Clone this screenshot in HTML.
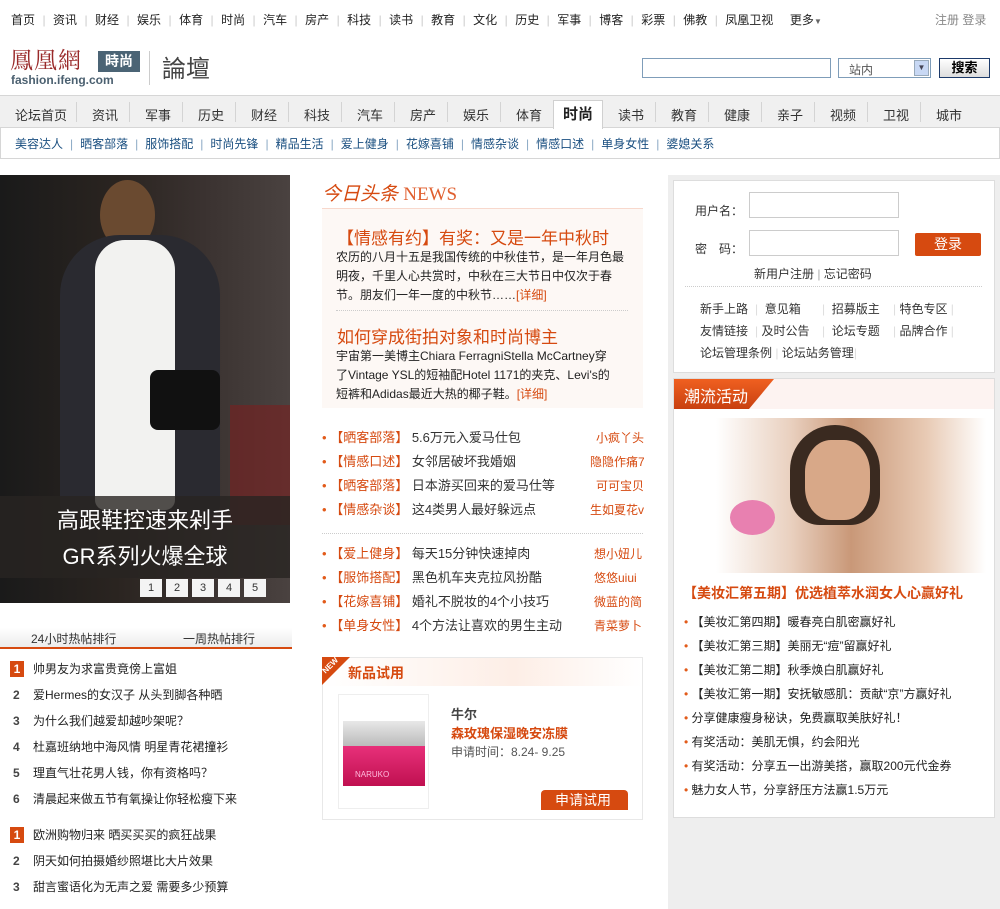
<!DOCTYPE html>
<html><head><meta charset="utf-8"><style>
*{margin:0;padding:0;box-sizing:border-box}
body{width:1000px;height:909px;overflow:hidden;background:#fff;font-family:"Liberation Sans","Noto Sans CJK SC",sans-serif;font-size:12px;color:#333;position:relative}
.a{position:absolute;white-space:nowrap}
.sep{color:#ccc;display:inline-block;width:18px;text-align:center}
.nav{position:absolute;left:0;top:95px;width:1000px;height:33px;background:#f0f0f0;border-top:1px solid #d6d6d6;border-bottom:1px solid #d6d6d6}
.nav span{position:absolute;top:9px;font-size:13px;color:#333}
.nav i{position:absolute;top:6px;width:1px;height:20px;background:#d4d4d4}
.sub{position:absolute;left:0;top:128px;width:1000px;height:31px;border:1px solid #d6d6d6;border-top:none}
.sub span{color:#1a4f80;font-size:12px}
.sub b{color:#8aa8c4;font-weight:normal;margin:0 7px}
.o{color:#d64a10}
.dot{color:#e25b1a}
.l div{height:24px;line-height:24px;overflow:hidden}
.r div{height:24px;line-height:24px}
</style></head><body>
<div class="a" style="left:11px;top:11px;font-size:12px;color:#222">首页<span class="sep">|</span>资讯<span class="sep">|</span>财经<span class="sep">|</span>娱乐<span class="sep">|</span>体育<span class="sep">|</span>时尚<span class="sep">|</span>汽车<span class="sep">|</span>房产<span class="sep">|</span>科技<span class="sep">|</span>读书<span class="sep">|</span>教育<span class="sep">|</span>文化<span class="sep">|</span>历史<span class="sep">|</span>军事<span class="sep">|</span>博客<span class="sep">|</span>彩票<span class="sep">|</span>佛教<span class="sep">|</span>凤凰卫视 &nbsp; &nbsp; 更多<span style="font-size:8px;color:#666">▼</span></div>
<div class="a" style="left:935px;top:11px;color:#888">注册 登录</div>
<div class="a" style="left:10px;top:46px;font-family:'Noto Serif CJK SC',serif;font-size:23px;color:#9a2a2a;letter-spacing:1px;line-height:26px">鳳凰網</div>
<div class="a" style="left:98px;top:51px;width:42px;height:21px;background:#4b6475;color:#fff;font-weight:bold;font-size:14px;text-align:center;line-height:21px">時尚</div>
<div class="a" style="left:11px;top:73px;font-size:12px;font-weight:bold;color:#4b6070">fashion.ifeng.com</div>
<div class="a" style="left:149px;top:51px;width:1px;height:34px;background:#ccc"></div>
<div class="a" style="left:162px;top:52px;font-size:24px;color:#444;font-family:'Noto Sans CJK TC',sans-serif;line-height:30px">論壇</div>
<div class="a" style="left:642px;top:58px;width:189px;height:20px;border:1px solid #7f9db9"></div>
<div class="a" style="left:838px;top:58px;width:93px;height:20px;border:1px solid #7f9db9;color:#555;padding:2px 10px">站内<span style="position:absolute;right:1px;top:1px;width:15px;height:16px;background:#c8d8f4;border:1px solid #9ab;font-size:8px;text-align:center;line-height:14px;color:#445">▼</span></div>
<div class="a" style="left:939px;top:58px;width:51px;height:20px;border:1px solid #1c3a6a;background:linear-gradient(#fff,#ddd);font-weight:bold;font-size:13px;text-align:center;line-height:18px;color:#000">搜索</div>
<div class="nav">
<span style="left:15px">论坛首页</span><i style="left:76px"></i>
<span style="left:92px">资讯</span><i style="left:129px"></i>
<span style="left:145px">军事</span><i style="left:182px"></i>
<span style="left:198px">历史</span><i style="left:235px"></i>
<span style="left:251px">财经</span><i style="left:288px"></i>
<span style="left:304px">科技</span><i style="left:341px"></i>
<span style="left:357px">汽车</span><i style="left:394px"></i>
<span style="left:410px">房产</span><i style="left:447px"></i>
<span style="left:463px">娱乐</span><i style="left:500px"></i>
<span style="left:516px">体育</span>
<div style="position:absolute;left:553px;top:4px;width:50px;height:29px;background:#fff;border:1px solid #d0d0d0;border-bottom:none;font-weight:bold;font-size:15px;text-align:center;line-height:28px;color:#222">时尚</div>
<span style="left:618px">读书</span><i style="left:655px"></i>
<span style="left:671px">教育</span><i style="left:708px"></i>
<span style="left:724px">健康</span><i style="left:761px"></i>
<span style="left:777px">亲子</span><i style="left:814px"></i>
<span style="left:830px">视频</span><i style="left:867px"></i>
<span style="left:883px">卫视</span><i style="left:920px"></i>
<span style="left:936px">城市</span>
</div>
<div class="sub"><div class="a" style="left:14px;top:7px"><span>美容达人</span><b>|</b><span>晒客部落</span><b>|</b><span>服饰搭配</span><b>|</b><span>时尚先锋</span><b>|</b><span>精品生活</span><b>|</b><span>爱上健身</span><b>|</b><span>花嫁喜铺</span><b>|</b><span>情感杂谈</span><b>|</b><span>情感口述</span><b>|</b><span>单身女性</span><b>|</b><span>婆媳关系</span></div></div>

<div class="a" style="left:0;top:175px;width:290px;height:428px;background:linear-gradient(90deg,#1a1a1a,#2a2420 40%,#3a3230 70%,#4a4240);overflow:hidden">
<div style="position:absolute;left:230px;top:230px;width:60px;height:120px;background:#7a2020;opacity:.6"></div>
<div style="position:absolute;left:100px;top:5px;width:55px;height:70px;border-radius:50%;background:#6a4a30"></div>
<div style="position:absolute;left:60px;top:60px;width:160px;height:280px;background:#2a2a30;border-radius:60px 60px 10px 10px"></div>
<div style="position:absolute;left:95px;top:65px;width:80px;height:270px;background:#f2f2f0;border-radius:30px 30px 10px 10px"></div>
<div style="position:absolute;left:150px;top:195px;width:70px;height:60px;background:#111;border-radius:8px"></div>
<div style="position:absolute;left:0;top:321px;width:290px;height:82px;background:rgba(40,36,34,.8)"></div>
<div style="position:absolute;left:0;top:328px;width:290px;text-align:center;color:#fff;font-size:22px;line-height:36px">高跟鞋控速来剁手<br>GR系列火爆全球</div>
<div style="position:absolute;left:140px;top:404px;font-size:11px;color:#333">
<span style="display:inline-block;width:22px;height:18px;background:#f4f4f4;text-align:center;line-height:18px;margin-right:4px">1</span><span style="display:inline-block;width:22px;height:18px;background:#f4f4f4;text-align:center;line-height:18px;margin-right:4px">2</span><span style="display:inline-block;width:22px;height:18px;background:#f4f4f4;text-align:center;line-height:18px;margin-right:4px">3</span><span style="display:inline-block;width:22px;height:18px;background:#f4f4f4;text-align:center;line-height:18px;margin-right:4px">4</span><span style="display:inline-block;width:22px;height:18px;background:#f4f4f4;text-align:center;line-height:18px">5</span></div>
</div>
<div class="a" style="left:0;top:628px;width:292px;height:21px;background:linear-gradient(#fff,#ececec);border-bottom:2px solid #d64a10"></div>
<div class="a" style="left:31px;top:630px;font-size:12px">24小时热帖排行</div>
<div class="a" style="left:183px;top:630px;font-size:12px">一周热帖排行</div>
<div class="a" style="left:10px;top:661px;width:14px;height:16px;background:#d64a10;color:#fff;font-weight:bold;text-align:center;line-height:16px">1</div>
<div class="a" style="left:10px;top:827px;width:14px;height:16px;background:#d64a10;color:#fff;font-weight:bold;text-align:center;line-height:16px">1</div>
<div class="a" style="left:13px;top:656px;font-size:12px;line-height:26px;color:#444;font-weight:bold"><br>2<br>3<br>4<br>5<br>6</div>
<div class="a" style="left:33px;top:656px;font-size:12px;line-height:26px;color:#222">帅男友为求富贵竟傍上富姐<br>爱Hermes的女汉子 从头到脚各种晒<br>为什么我们越爱却越吵架呢？<br>杜嘉班纳地中海风情 明星青花裙撞衫<br>理直气壮花男人钱，你有资格吗？<br>清晨起来做五节有氧操让你轻松瘦下来</div>
<div class="a" style="left:13px;top:822px;font-size:12px;line-height:26px;color:#444;font-weight:bold"><br>2<br>3</div>
<div class="a" style="left:33px;top:822px;font-size:12px;line-height:26px;color:#222">欧洲购物归来 晒买买买的疯狂战果<br>阴天如何拍摄婚纱照堪比大片效果<br>甜言蜜语化为无声之爱 需要多少预算</div>

<div class="a" style="left:322px;top:183px;font-size:19px;color:#d64a10;font-style:italic;line-height:24px">今日头条 <span style="font-family:'Liberation Serif',serif;font-style:normal;color:#e06030">NEWS</span></div>
<div class="a" style="left:322px;top:208px;width:321px;height:200px;background:#fdf8f5;border-top:1px solid #f8d8cc"></div>
<div class="a o" style="left:337px;top:224px;font-size:17px">【情感有约】有奖：又是一年中秋时</div>
<div class="a" style="left:336px;top:248px;font-size:12px;line-height:19px;color:#222">农历的八月十五是我国传统的中秋佳节，是一年月色最<br>明夜，千里人心共赏时，中秋在三大节日中仅次于春<br>节。朋友们一年一度的中秋节……<span class="o">[详细]</span></div>
<div class="a" style="left:336px;top:310px;width:292px;border-top:1px dotted #ccc"></div>
<div class="a o" style="left:337px;top:323px;font-size:17px">如何穿成街拍对象和时尚博主</div>
<div class="a" style="left:336px;top:347px;font-size:12px;line-height:19px;color:#222">宇宙第一美博主Chiara FerragniStella McCartney穿<br>了Vintage YSL的短袖配Hotel 1171的夹克、Levi's的<br>短裤和Adidas最近大热的椰子鞋。<span class="o">[详细]</span></div>
<div class="a l" style="left:322px;top:426px;font-size:13px"><div><span class="dot">•</span> <span class="o">【晒客部落】</span> 5.6万元入爱马仕包</div><div><span class="dot">•</span> <span class="o">【情感口述】</span> 女邻居破坏我婚姻</div><div><span class="dot">•</span> <span class="o">【晒客部落】</span> 日本游买回来的爱马仕等</div><div><span class="dot">•</span> <span class="o">【情感杂谈】</span> 这4类男人最好躲远点</div></div>
<div class="a o l" style="left:590px;top:426px;font-size:12px;text-align:right;width:54px"><div>小疯丫头</div><div>隐隐作痛7</div><div>可可宝贝</div><div>生如夏花v</div></div>
<div class="a" style="left:322px;top:533px;width:321px;border-top:1px dotted #ccc"></div>
<div class="a l" style="left:322px;top:542px;font-size:13px"><div><span class="dot">•</span> <span class="o">【爱上健身】</span> 每天15分钟快速掉肉</div><div><span class="dot">•</span> <span class="o">【服饰搭配】</span> 黑色机车夹克拉风扮酷</div><div><span class="dot">•</span> <span class="o">【花嫁喜铺】</span> 婚礼不脱妆的4个小技巧</div><div><span class="dot">•</span> <span class="o">【单身女性】</span> 4个方法让喜欢的男生主动</div></div>
<div class="a o l" style="left:594px;top:542px;font-size:12px;width:50px"><div>想小妞儿</div><div>悠悠uiui</div><div>微蓝的简</div><div>青菜萝卜</div></div>
<div class="a" style="left:322px;top:657px;width:321px;height:163px;border:1px solid #e8e8e8"></div>
<div class="a" style="left:323px;top:658px;width:319px;height:28px;background:linear-gradient(90deg,#fff,#fdeee6 60%,#fff)"></div>
<div class="a" style="left:322px;top:657px;width:0;height:0;border-top:28px solid #d64a10;border-right:28px solid transparent"></div>
<div class="a" style="left:321px;top:661px;color:#fff;font-size:8px;font-weight:bold;transform:rotate(-45deg)">NEW</div>
<div class="a o" style="left:348px;top:663px;font-size:14px;font-weight:bold">新品试用</div>
<div class="a" style="left:338px;top:694px;width:91px;height:115px;border:1px solid #eee"></div>
<div class="a" style="left:343px;top:721px;width:82px;height:25px;background:linear-gradient(#e8e8e8,#bbb)"></div>
<div class="a" style="left:343px;top:746px;width:82px;height:40px;background:linear-gradient(#e8307a,#c01050);color:#fbd;font-size:8px;padding-top:24px;padding-left:12px">NARUKO</div>
<div class="a" style="left:451px;top:704px;font-size:13px;font-weight:bold;color:#444">牛尔</div>
<div class="a o" style="left:451px;top:723px;font-size:13px;font-weight:bold">森玫瑰保湿晚安冻膜</div>
<div class="a" style="left:451px;top:743px;font-size:12px;color:#555">申请时间：8.24- 9.25</div>
<div class="a" style="left:541px;top:790px;width:87px;height:20px;background:#d64a10;border-radius:4px 4px 0 0;color:#fff;font-size:14px;line-height:20px;padding-left:14px">申请试用</div>

<div class="a" style="left:668px;top:175px;width:332px;height:734px;background:#eee"></div>
<div class="a" style="left:673px;top:180px;width:322px;height:193px;background:#fff;border:1px solid #ddd"></div>
<div class="a" style="left:695px;top:202px;font-size:12px">用户名：</div>
<div class="a" style="left:749px;top:192px;width:150px;height:26px;border:1px solid #ccc"></div>
<div class="a" style="left:695px;top:240px;font-size:12px">密　码：</div>
<div class="a" style="left:749px;top:230px;width:150px;height:26px;border:1px solid #ccc"></div>
<div class="a" style="left:915px;top:233px;width:66px;height:23px;background:#d64a10;color:#fff;font-size:14px;text-align:center;line-height:23px;border-radius:2px">登录</div>
<div class="a" style="left:754px;top:265px;font-size:12px">新用户注册 <span style="color:#aaa">|</span> 忘记密码</div>
<div class="a" style="left:685px;top:286px;width:297px;border-top:1px dotted #ccc"></div>
<div class="a" style="left:700px;top:298px;font-size:12px;line-height:22px">新手上路<br>友情链接<br>论坛管理条例 <span style="color:#ddd">|</span> 论坛站务管理<span style="color:#ddd">|</span></div>
<div class="a" style="left:755px;top:298px;font-size:12px;line-height:22px"><span style="color:#ddd">|</span> &nbsp;意见箱<br><span style="color:#ddd">|</span> 及时公告</div>
<div class="a" style="left:822px;top:298px;font-size:12px;line-height:22px"><span style="color:#ddd">|</span> &nbsp;招募版主<br><span style="color:#ddd">|</span> &nbsp;论坛专题</div>
<div class="a" style="left:893px;top:298px;font-size:12px;line-height:22px"><span style="color:#ddd">|</span> 特色专区 <span style="color:#ddd">|</span><br><span style="color:#ddd">|</span> 品牌合作 <span style="color:#ddd">|</span></div>
<div class="a" style="left:673px;top:378px;width:322px;height:440px;background:#fff;border:1px solid #ddd"></div>
<div class="a" style="left:674px;top:379px;width:320px;height:30px;background:#fdf3f1"></div>
<div class="a" style="left:674px;top:379px;width:100px;height:30px;background:linear-gradient(#f06020,#c84010);clip-path:polygon(0 0,100% 0,75% 100%,0 100%)"></div>
<div class="a" style="left:684px;top:383px;color:#fff;font-size:16px">潮流活动</div>
<div class="a" style="left:686px;top:418px;width:300px;height:155px;background:linear-gradient(90deg,#fff 10%,#e9d0bf 35%,#c99878 55%,#e8cab4 80%,#fff)"></div>
<div class="a" style="left:790px;top:425px;width:90px;height:100px;border-radius:45px 45px 30px 30px;background:#3a2a20"></div>
<div class="a" style="left:805px;top:440px;width:65px;height:80px;border-radius:40%;background:#d8a888"></div>
<div class="a" style="left:730px;top:500px;width:45px;height:35px;border-radius:50%;background:#e880b0"></div>
<div class="a o" style="left:683px;top:583px;font-size:14px;font-weight:bold">【美妆汇第五期】优选植萃水润女人心赢好礼</div>
<div class="a r" style="left:684px;top:610px;font-size:12px;color:#222"><div><span class="dot">•</span> 【美妆汇第四期】暖春亮白肌密赢好礼</div><div><span class="dot">•</span> 【美妆汇第三期】美丽无“痘”留赢好礼</div><div><span class="dot">•</span> 【美妆汇第二期】秋季焕白肌赢好礼</div><div><span class="dot">•</span> 【美妆汇第一期】安抚敏感肌：贡献“京”方赢好礼</div><div><span class="dot">•</span> 分享健康瘦身秘诀，免费赢取美肤好礼！</div><div><span class="dot">•</span> 有奖活动：美肌无惧，约会阳光</div><div><span class="dot">•</span> 有奖活动：分享五一出游美搭，赢取200元代金券</div><div><span class="dot">•</span> 魅力女人节，分享舒压方法赢1.5万元</div></div>
</body></html>
